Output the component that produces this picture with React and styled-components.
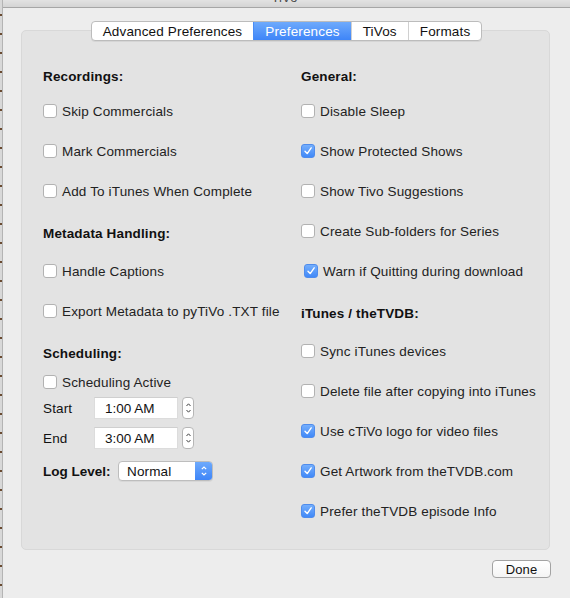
import React from "react";
import styled, { createGlobalStyle, css } from "styled-components";

const GlobalStyle = createGlobalStyle`
  html, body {
    margin: 0;
    padding: 0;
    background: #ececec;
  }
  body {
    font-family: "Liberation Sans", Arial, sans-serif;
    font-size: 13.5px;
    letter-spacing: 0.15px;
    color: #222;
  }
`;

const leftItems = [
  { type: "heading", label: "Recordings:", mt: 0 },
  { type: "check", label: "Skip Commercials", mt: 15 },
  { type: "check", label: "Mark Commercials", mt: 20 },
  { type: "check", label: "Add To iTunes When Complete", mt: 20 },
  { type: "heading", label: "Metadata Handling:", mt: 22 },
  { type: "check", label: "Handle Captions", mt: 18 },
  { type: "check", label: "Export Metadata to pyTiVo .TXT file", mt: 20 },
  { type: "heading", label: "Scheduling:", mt: 22 },
  { type: "check", label: "Scheduling Active", mt: 9 },
];

const rightItems = [
  { type: "heading", label: "General:", mt: 0 },
  { type: "check", label: "Disable Sleep", mt: 15 },
  { type: "check", label: "Show Protected Shows", mt: 20, on: true },
  { type: "check", label: "Show Tivo Suggestions", mt: 20 },
  { type: "check", label: "Create Sub-folders for Series", mt: 20 },
  { type: "check", label: "Warn if Quitting during download", mt: 20, on: true, indent: 3 },
  { type: "heading", label: "iTunes / theTVDB:", mt: 22 },
  { type: "check", label: "Sync iTunes devices", mt: 18 },
  { type: "check", label: "Delete file after copying into iTunes", mt: 20 },
  { type: "check", label: "Use cTiVo logo for video files", mt: 20, on: true },
  { type: "check", label: "Get Artwork from theTVDB.com", mt: 20, on: true },
  { type: "check", label: "Prefer theTVDB episode Info", mt: 20, on: true },
];

const tabs = ["Advanced Preferences", "Preferences", "TiVos", "Formats"];

const Check = ({ on }) => (
  <Box $on={on}>
    {on && (
      <svg width="10" height="10" viewBox="0 0 10 10">
        <path d="M2 5.3 L4.2 7.6 L8.2 1.8" fill="none" stroke="#fff" strokeWidth="1.4" strokeLinecap="round" strokeLinejoin="round" />
      </svg>
    )}
  </Box>
);

const Stepper = () => (
  <StepperBox>
    <svg width="7" height="14" viewBox="0 0 7 14">
      <path d="M1.5 5 L3.5 2.8 L5.5 5" fill="none" stroke="#444" strokeWidth="1" />
      <path d="M1.5 9 L3.5 11.2 L5.5 9" fill="none" stroke="#444" strokeWidth="1" />
    </svg>
  </StepperBox>
);

const renderItem = (it) =>
  it.type === "heading" ? (
    <Heading key={it.label} $mt={it.mt}>{it.label}</Heading>
  ) : (
    <CheckRow key={it.label} $mt={it.mt} $indent={it.indent || 0}>
      <Check on={it.on} />
      <span>{it.label}</span>
    </CheckRow>
  );

export default function App() {
  return (
    <>
      <GlobalStyle />
      <Screen>
        <BehindStrip />
        <Window>
          <TitleBar>
            <Title>TiVo</Title>
          </TitleBar>
          <Body>
            <Tabs>
              {tabs.map((t) => (
                <Tab key={t} $active={t === "Preferences"}>{t}</Tab>
              ))}
            </Tabs>
            <Panel>
              <Column>
                {leftItems.map(renderItem)}
                <FieldRow $mt={5}>
                  <FieldLabel>Start</FieldLabel>
                  <TimeField>1:00 AM</TimeField>
                  <Stepper />
                </FieldRow>
                <FieldRow $mt={8}>
                  <FieldLabel>End</FieldLabel>
                  <TimeField>3:00 AM</TimeField>
                  <Stepper />
                </FieldRow>
                <LogRow>
                  <LogLabel>Log Level:</LogLabel>
                  <Popup>
                    <PopupText>Normal</PopupText>
                    <PopupCap>
                      <svg width="8" height="14" viewBox="0 0 8 14">
                        <path d="M1.8 5.2 L4 3 L6.2 5.2" fill="none" stroke="#fff" strokeWidth="1.2" />
                        <path d="M1.8 8.8 L4 11 L6.2 8.8" fill="none" stroke="#fff" strokeWidth="1.2" />
                      </svg>
                    </PopupCap>
                  </Popup>
                </LogRow>
              </Column>
              <Column>{rightItems.map(renderItem)}</Column>
            </Panel>
            <Footer>
              <Button>Done</Button>
            </Footer>
          </Body>
        </Window>
      </Screen>
    </>
  );
}

const Screen = styled.div`
  display: flex;
  width: 570px;
  height: 598px;
  overflow: hidden;
`;

// bit of the window behind, peeking out on the left
const BehindStrip = styled.div`
  width: 2px;
  background: repeating-linear-gradient(
    to bottom,
    #d8d8d8 0px,
    #d8d8d8 14px,
    #6a4a30 14px,
    #6a4a30 16px,
    #d8d8d8 16px,
    #d8d8d8 19px
  );
`;

const Window = styled.div`
  flex: 1;
  display: flex;
  flex-direction: column;
  border-left: 1px solid #b4b4b4;
  background: #ededed;
`;

const TitleBar = styled.div`
  height: 7px;
  overflow: hidden;
  background: linear-gradient(#e2e2e2, #d4d4d4);
  border-bottom: 1px solid #a6a6a6;
  display: flex;
  justify-content: center;
`;

const Title = styled.div`
  margin-top: -9px;
  margin-left: -4px;
  font-size: 13px;
  line-height: 14px;
  color: #4a4a4a;
`;

const Body = styled.div`
  flex: 1;
  display: flex;
  flex-direction: column;
  padding: 13px 20px 0 18px;
`;

const Tabs = styled.div`
  align-self: center;
  display: flex;
  height: 18px;
  margin-bottom: -11px;
  margin-left: 2px;
  position: relative;
  z-index: 1;
  background: #fff;
  border: 1px solid #bcbcbc;
  border-radius: 4px;
  box-shadow: 0 1px 0 rgba(0, 0, 0, 0.06);
  overflow: hidden;
`;

const Tab = styled.div`
  display: flex;
  align-items: center;
  padding: 0 11px;
  color: #111;
  & + & {
    border-left: 1px solid #d0d0d0;
  }
  ${(p) =>
    p.$active &&
    css`
      color: #fff;
      background: linear-gradient(#6eaafc, #3e85f8);
      border-left-color: #4a8cf5 !important;
    `}
`;

const Panel = styled.div`
  height: 520px;
  box-sizing: border-box;
  display: grid;
  grid-template-columns: 258px 1fr;
  padding: 35px 0 0 21px;
  background: #e3e3e3;
  border: 1px solid #d8d8d8;
  border-radius: 5px;
`;

const Column = styled.div`
  display: flex;
  flex-direction: column;
`;

const Heading = styled.div`
  height: 20px;
  display: flex;
  align-items: center;
  margin-top: ${(p) => p.$mt}px;
  font-weight: bold;
  color: #111;
`;

const CheckRow = styled.div`
  height: 20px;
  display: flex;
  align-items: center;
  gap: 5px;
  margin-top: ${(p) => p.$mt}px;
  padding-left: ${(p) => p.$indent}px;
  color: #222;
`;

const Box = styled.div`
  width: 14px;
  height: 14px;
  box-sizing: border-box;
  border-radius: 3px;
  display: flex;
  align-items: center;
  justify-content: center;
  flex-shrink: 0;
  ${(p) =>
    p.$on
      ? css`
          background: linear-gradient(#74aefc, #4189f8);
          border: 1px solid #4f8cec;
        `
      : css`
          background: #fff;
          border: 1px solid #b2b2b2;
        `}
`;

const FieldRow = styled.div`
  display: flex;
  align-items: center;
  height: 22px;
  margin-top: ${(p) => p.$mt}px;
`;

const FieldLabel = styled.div`
  width: 51px;
  color: #111;
`;

const TimeField = styled.div`
  width: 84px;
  height: 22px;
  box-sizing: border-box;
  padding-left: 10px;
  display: flex;
  align-items: center;
  background: #fff;
  border: 1px solid #dcdcdc;
  border-top-color: #cfcfcf;
  letter-spacing: 0;
  color: #111;
`;

const StepperBox = styled.div`
  margin-left: 4px;
  width: 12px;
  height: 22px;
  box-sizing: border-box;
  display: flex;
  align-items: center;
  justify-content: center;
  background: #fff;
  border: 1px solid #b6b6b6;
  border-radius: 4px;
`;

const LogRow = styled.div`
  display: flex;
  align-items: center;
  height: 20px;
  margin-top: 12px;
`;

const LogLabel = styled.div`
  width: 75px;
  font-weight: bold;
  letter-spacing: 0;
  color: #111;
`;

const Popup = styled.div`
  width: 95px;
  height: 20px;
  box-sizing: border-box;
  display: flex;
  background: #fff;
  border: 1px solid #bdbdbd;
  border-radius: 4px;
  overflow: hidden;
  box-shadow: 0 1px 0 rgba(0, 0, 0, 0.05);
`;

const PopupText = styled.div`
  flex: 1;
  display: flex;
  align-items: center;
  padding-left: 8px;
  color: #111;
`;

const PopupCap = styled.div`
  width: 17px;
  display: flex;
  align-items: center;
  justify-content: center;
  background: linear-gradient(#6eaafc, #3e85f8);
`;

const Footer = styled.div`
  display: flex;
  justify-content: flex-end;
  padding-top: 10px;
  margin-right: -1px;
`;

const Button = styled.div`
  width: 59px;
  height: 18px;
  box-sizing: border-box;
  display: flex;
  align-items: center;
  justify-content: center;
  background: linear-gradient(#ffffff, #f4f4f4);
  border: 1px solid #a3a3a3;
  border-radius: 4px;
  font-size: 13px;
  color: #111;
`;
